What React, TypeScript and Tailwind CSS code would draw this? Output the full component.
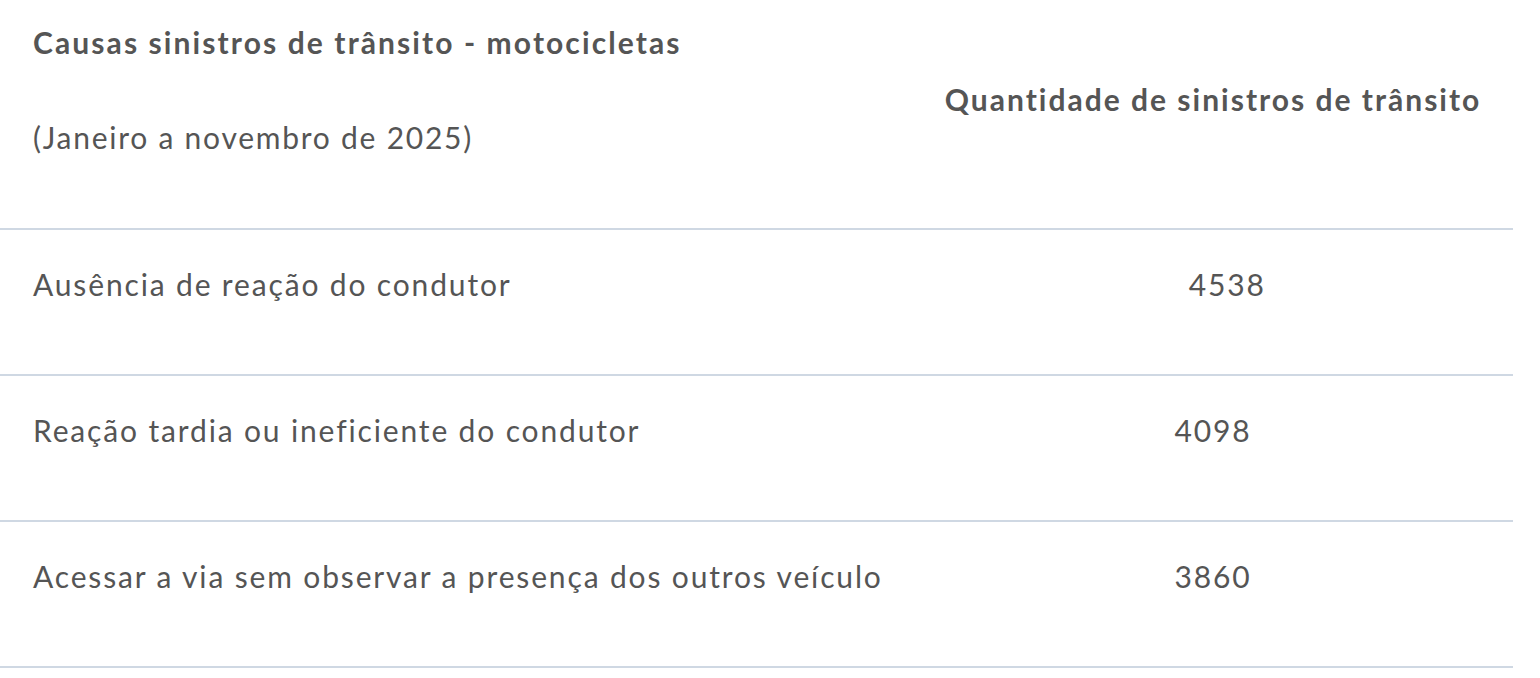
const rows: [string, string][] = [
  ['Ausência de reação do condutor', '\u00a0\u00a0\u00a04538'],
  ['Reação tardia ou ineficiente do condutor', '4098'],
  ['Acessar a via sem observar a presença dos outros veículo', '3860'],
]

export default function App() {
  return (
    <div className="w-[1540px] h-[678px] bg-white overflow-hidden text-[#555555] font-['Lato',sans-serif]">
      <div className="w-[1513px]">
        {/* header */}
        <div className="grid grid-cols-[913px_600px] h-[230px] border-b-2 border-[#cfd8e3]">
          <div className="pl-[33px] pt-[22px]">
            <p className="text-[30px] leading-[40px] font-bold tracking-[2.1px]">Causas sinistros de trânsito - motocicletas</p>
            <p className="text-[30px] leading-[40px] mt-[55px] tracking-[1.75px]">(Janeiro a novembro de 2025)</p>
          </div>
          <div className="pt-[79px] text-center">
            <p className="text-[30px] leading-[40px] font-bold tracking-[2px]">Quantidade de sinistros de trânsito</p>
          </div>
        </div>
        {rows.map(([cause, qty]) => (
          <div key={cause} className="grid grid-cols-[913px_600px] h-[146px] border-b-2 border-[#cfd8e3]">
            <div className="pl-[33px] pt-[34px]">
              <p className="text-[30px] leading-[40px] tracking-[1.85px]">{cause}</p>
            </div>
            <div className="pt-[34px] text-center">
              <p className="text-[30px] leading-[40px] tracking-[1.85px]">{qty}</p>
            </div>
          </div>
        ))}
      </div>
    </div>
  )
}
